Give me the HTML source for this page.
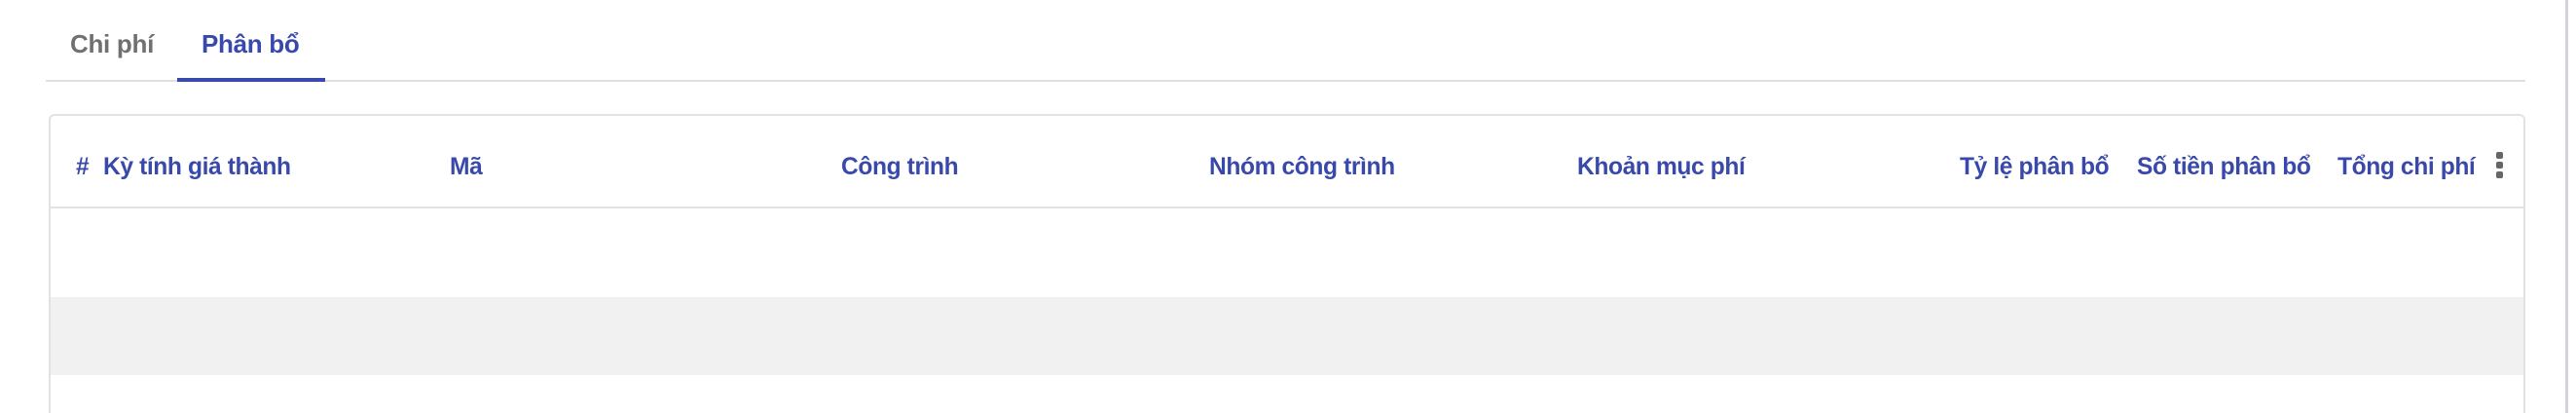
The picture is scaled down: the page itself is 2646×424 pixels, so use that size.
<!DOCTYPE html>
<html><head><meta charset="utf-8"><style>
html,body{margin:0;padding:0;background:#fff;width:2646px;height:424px;overflow:hidden;position:relative;font-family:"Liberation Sans",Arial,sans-serif}
.a{position:absolute;white-space:nowrap}
.tab{font-size:26px;top:30px;font-weight:bold;letter-spacing:-0.3px}
.h{font-size:24.6px;top:158px;color:#3949ab;font-weight:bold;letter-spacing:-0.4px}
</style></head><body>
<div class="a tab" style="left:72px;color:#707070">Chi phí</div>
<div class="a tab" style="left:207px;color:#3949ab">Phân bổ</div>
<div class="a" style="left:47px;top:82px;width:2547px;height:2px;background:#e0e0e0"></div>
<div class="a" style="left:182px;top:80px;width:152px;height:4px;background:#3949ab"></div>
<div class="a" style="left:50px;top:117px;width:2544px;height:307px;border:2px solid #e2e2e2;border-bottom:none;border-radius:6px 6px 0 0;box-sizing:border-box"></div>
<div class="a" style="left:52px;top:212px;width:2540px;height:2px;background:#e2e2e2"></div>
<div class="a" style="left:52px;top:305px;width:2540px;height:80px;background:#f1f1f1"></div>
<div class="a" style="left:2635px;top:0;width:3px;height:424px;background:#d4d4dc"></div>
<div class="a h" style="left:78px">#</div>
<div class="a h" style="left:106px">Kỳ tính giá thành</div>
<div class="a h" style="left:462px">Mã</div>
<div class="a h" style="left:864px">Công trình</div>
<div class="a h" style="left:1242px">Nhóm công trình</div>
<div class="a h" style="left:1620px">Khoản mục phí</div>
<div class="a h" style="left:2013px">Tỷ lệ phân bổ</div>
<div class="a h" style="left:2195px">Số tiền phân bổ</div>
<div class="a h" style="left:2401px">Tổng chi phí</div>
<div class="a" style="left:2564px;top:156px;width:7px;height:7px;border-radius:2px;background:#666"></div>
<div class="a" style="left:2564px;top:166px;width:7px;height:7px;border-radius:2px;background:#666"></div>
<div class="a" style="left:2564px;top:176px;width:7px;height:7px;border-radius:2px;background:#666"></div>
</body></html>
